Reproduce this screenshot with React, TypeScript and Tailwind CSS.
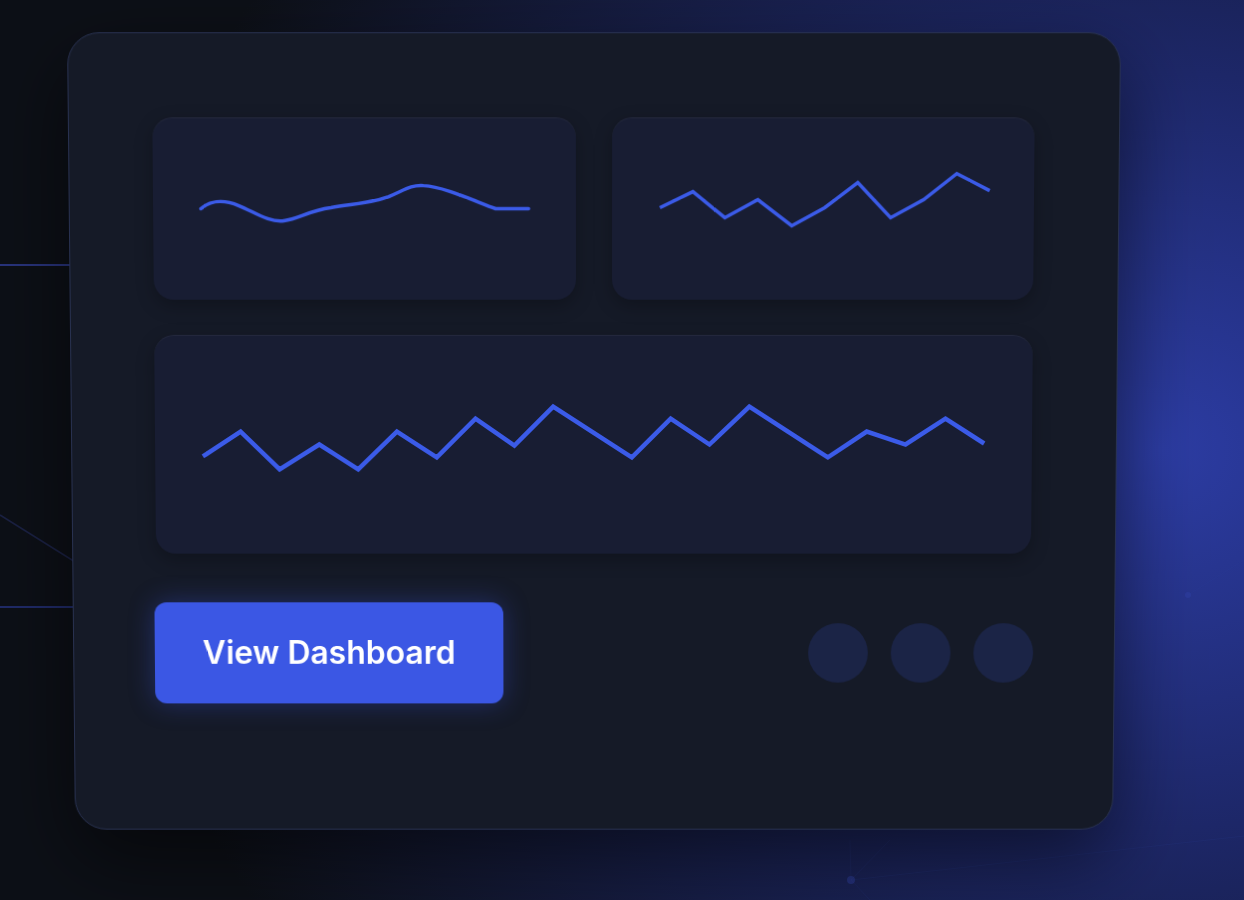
import type { ReactNode } from 'react';

const smoothPath =
  'M47,90 C55,83 68,80 85,87 C100,93 115,104 130,102 C145,100 155,92 177,89 C200,85 215,85 235,78 C250,72 257,66 270,67 C290,68 320,82 342,90 L375,90';

const zigzagSmall = [
  [47, 89], [80, 73], [112, 99], [145, 81], [179, 107], [212, 89],
  [245, 64], [278, 99], [311, 81], [344, 55], [377, 72],
];

const zigzagBig = [
  [47, 121], [85, 96], [124, 134], [164, 109], [203, 134], [242, 96],
  [282, 122], [321, 83], [360, 110], [399, 71], [478, 122], [517, 83],
  [556, 109], [596, 71], [675, 122], [714, 96], [753, 109], [793, 83],
  [832, 108],
];

const toPoints = (pts: number[][]) => pts.map((p) => p.join(',')).join(' ');

function Panel({ className, children }: { className: string; children: ReactNode }) {
  return (
    <div
      className={`rounded-[20px] bg-[#181d33] border-t border-white/[0.05] shadow-[0_6px_18px_rgba(0,0,0,0.25)] ${className}`}
    >
      {children}
    </div>
  );
}

function Backdrop() {
  return (
    <svg className="absolute inset-0 w-full h-full" viewBox="0 0 1244 900" fill="none">
      <line x1="0" y1="265" x2="90" y2="265" stroke="#28337c" strokeWidth="2" />
      <line x1="0" y1="607" x2="90" y2="607" stroke="#1f2a68" strokeWidth="2" />
      <line x1="0" y1="515" x2="80" y2="565" stroke="#1a2042" strokeWidth="1.5" />
      <g stroke="#3546a8" strokeOpacity="0.12" strokeWidth="1">
        <line x1="851" y1="880" x2="1244" y2="836" />
        <line x1="851" y1="880" x2="890" y2="840" />
        <line x1="851" y1="880" x2="870" y2="900" />
        <line x1="851" y1="880" x2="850" y2="840" />
        <line x1="1188" y1="595" x2="1244" y2="560" />
      </g>
      <circle cx="851" cy="880" r="4" fill="#2e3e9e" fillOpacity="0.5" />
      <circle cx="1188" cy="595" r="3" fill="#3546b0" fillOpacity="0.35" />
    </svg>
  );
}

export default function App() {
  return (
    <div className="relative w-[1244px] h-[900px] overflow-hidden bg-[#0c0f16] bg-[radial-gradient(ellipse_1050px_900px_at_1160px_450px,#2c3ca4_0%,#1d2768_42%,#0c0f16_100%)] font-['Inter','Noto_Sans',sans-serif]">
      <Backdrop />

      <div className="relative pl-[71px] pt-[35px]">
        <div className="w-[1046px] rounded-[32px] border border-[#283150] bg-[#151a27] pl-[83px] pr-[84px] pt-[83px] pb-[127px] shadow-[0_30px_80px_rgba(0,0,0,0.55)] [transform:perspective(2000px)_rotateX(-2.2deg)]">
          <div className="flex gap-[36px]">
            <Panel className="w-[421px] h-[181px]">
              <svg viewBox="0 0 421 181" className="w-full h-full" fill="none">
                <path d={smoothPath} stroke="#3b5be8" strokeWidth="3.5" strokeLinecap="round" />
              </svg>
            </Panel>
            <Panel className="w-[421px] h-[181px]">
              <svg viewBox="0 0 421 181" className="w-full h-full" fill="none">
                <polyline points={toPoints(zigzagSmall)} stroke="#3b5be8" strokeWidth="3.5" />
              </svg>
            </Panel>
          </div>

          <Panel className="mt-[35px] h-[219px]">
            <svg viewBox="0 0 879 219" className="w-full h-full" fill="none">
              <polyline points={toPoints(zigzagBig)} stroke="#3b5be8" strokeWidth="4.5" />
            </svg>
          </Panel>

          <div className="mt-[49px] flex items-center justify-between">
            <button className="-ml-[2px] w-[350px] h-[102px] rounded-[12px] bg-[#3b57e4] text-white text-[32px] font-semibold shadow-[0_0_26px_rgba(59,87,228,0.35)]">
              View Dashboard
            </button>
            <div className="-mr-[3px] flex gap-[23px]">
              <div className="w-[60px] h-[60px] rounded-full bg-[#1b2446]" />
              <div className="w-[60px] h-[60px] rounded-full bg-[#1b2446]" />
              <div className="w-[60px] h-[60px] rounded-full bg-[#1b2446]" />
            </div>
          </div>
        </div>
      </div>
    </div>
  );
}
